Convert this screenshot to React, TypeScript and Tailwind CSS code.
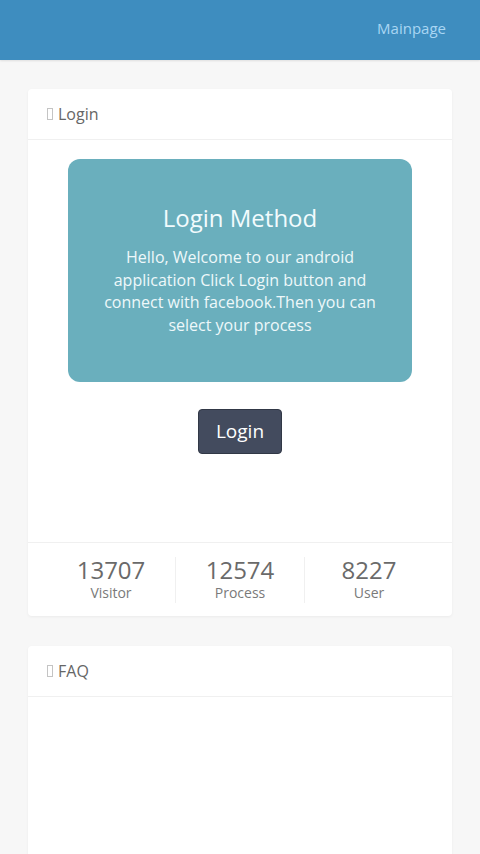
import React from "react";

const Tofu = () => (
  <span className="inline-block w-[6px] h-[12px] border border-[#c4c4c4] mr-[5px] align-[-1px]" />
);

export default function App() {
  const font = { fontFamily: '"Open Sans", "Noto Sans", sans-serif' };
  return (
    <div className="min-h-[854px] bg-[#f7f7f7] flex flex-col" style={font}>
      <div className="h-[60px] bg-[#3e8dbf] flex items-center justify-end pr-[34px] pb-[4px] shadow-[0_1px_2px_rgba(0,0,0,0.1)]">
        <span className="text-[15px] text-[#a9d6f3]">Mainpage</span>
      </div>
      <div className="px-[28px] pt-[29px] flex flex-col gap-[30px]">
        <div className="bg-white rounded-[4px] shadow-[0_1px_3px_rgba(0,0,0,0.05)] flex flex-col">
          <div className="h-[51px] border-b border-[#f0f0f0] flex items-center px-[19px] text-[16px] text-[#666]">
            <Tofu />
            Login
          </div>
          <div className="h-[403px] px-[40px] pt-[19px] flex flex-col items-center border-b border-[#f0f0f0]">
            <div className="w-full h-[223px] bg-[#6aafbd] rounded-[12px] flex flex-col items-center pt-[43px] px-[30px] text-center">
              <div className="text-[24px] leading-[32px] text-[#f2fbfd]">Login Method</div>
              <div className="mt-[12px] text-[16px] leading-[22.7px] text-[#eef8fa]">
                Hello, Welcome to our android application Click Login button and connect with facebook.Then you can select your process
              </div>
            </div>
            <button className="mt-[27px] h-[45px] w-[84px] bg-[#434b5e] border border-[#313846] rounded-[4px] text-white text-[19px]">
              Login
            </button>
          </div>
          <div className="h-[73px] px-[19px] flex items-center">
            {[
              ["13707", "Visitor"],
              ["12574", "Process"],
              ["8227", "User"],
            ].map(([n, l], i) => (
              <div
                key={l}
                className={`flex-1 flex flex-col items-center ${i > 0 ? "border-l border-[#f0f0f0]" : ""}`}
              >
                <div className="text-[24px] leading-[26px] text-[#6a6a6a]">{n}</div>
                <div className="text-[14px] leading-[20px] text-[#7a7a7a]">{l}</div>
              </div>
            ))}
          </div>
        </div>
        <div className="bg-white rounded-[4px] shadow-[0_1px_3px_rgba(0,0,0,0.05)] flex flex-col h-[240px]">
          <div className="h-[51px] border-b border-[#f0f0f0] flex items-center px-[19px] text-[16px] text-[#666]">
            <Tofu />
            FAQ
          </div>
        </div>
      </div>
    </div>
  );
}
